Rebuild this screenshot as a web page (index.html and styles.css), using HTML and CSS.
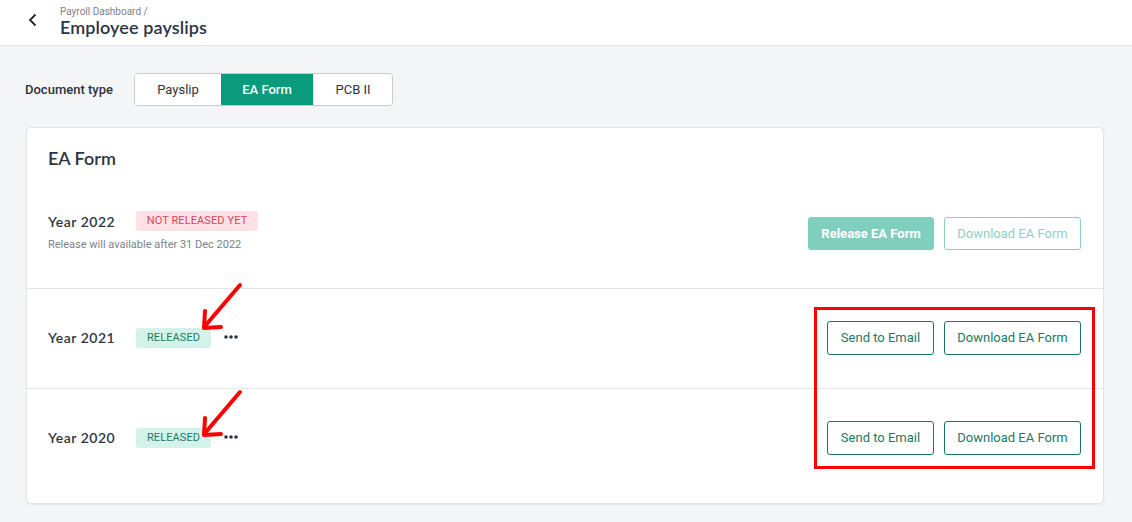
FILE: index.html
```html
<!DOCTYPE html>
<html>
<head>
<meta charset="utf-8">
<link rel="stylesheet" href="styles.css">
</head>
<body>
<header class="topbar">
  <svg class="back" width="12" height="14" viewBox="0 0 12 14"><path d="M8.5 1.5 L3 7 L8.5 12.5" fill="none" stroke="#1f2430" stroke-width="1.8"/></svg>
  <div class="titles">
    <div class="crumb">Payroll Dashboard /</div>
    <h1 class="title">Employee payslips</h1>
  </div>
</header>
<main class="main">
  <div class="doctype">
    <span class="doctype-label">Document type</span>
    <div class="seg">
      <button class="seg-btn seg-payslip">Payslip</button>
      <button class="seg-btn seg-ea active">EA Form</button>
      <button class="seg-btn seg-pcb">PCB II</button>
    </div>
  </div>
  <section class="card">
    <h2 class="card-title">EA Form</h2>
    <div class="row row-first">
      <div class="left">
        <div class="line">
          <span class="year">Year 2022</span>
          <span class="badge badge-pending">NOT RELEASED YET</span>
        </div>
        <div class="note">Release will available after 31 Dec 2022</div>
      </div>
      <div class="actions">
        <button class="btn btn-release">Release EA Form</button>
        <button class="btn btn-download disabled">Download EA Form</button>
      </div>
    </div>
    <div class="row">
      <div class="line">
        <span class="year">Year 2021</span>
        <span class="badge badge-released">RELEASED</span>
        <svg class="dots" width="14" height="4" viewBox="0 0 14 4"><circle cx="2" cy="2" r="1.8"/><circle cx="7" cy="2" r="1.8"/><circle cx="12" cy="2" r="1.8"/></svg>
      </div>
      <div class="actions">
        <button class="btn btn-email">Send to Email</button>
        <button class="btn btn-download">Download EA Form</button>
      </div>
    </div>
    <div class="row">
      <div class="line">
        <span class="year">Year 2020</span>
        <span class="badge badge-released">RELEASED</span>
        <svg class="dots" width="14" height="4" viewBox="0 0 14 4"><circle cx="2" cy="2" r="1.8"/><circle cx="7" cy="2" r="1.8"/><circle cx="12" cy="2" r="1.8"/></svg>
      </div>
      <div class="actions">
        <button class="btn btn-email">Send to Email</button>
        <button class="btn btn-download">Download EA Form</button>
      </div>
    </div>
  </section>
</main>
<svg class="annot" width="1132" height="522" viewBox="0 0 1132 522">
  <g fill="none" stroke="#ff0000" stroke-width="4" stroke-linecap="round" stroke-linejoin="round">
    <path d="M240 285 L205 326"/>
    <path d="M205 311 L204 328 L221 327"/>
    <path d="M240 392 L205 433"/>
    <path d="M205 418 L204 435 L221 434"/>
  </g>
  <rect x="815.5" y="308.5" width="278" height="159" fill="none" stroke="#ff0000" stroke-width="3"/>
</svg>
</body>
</html>
```
FILE: styles.css
```css
* { box-sizing: border-box; }
html, body { margin: 0; padding: 0; }
body {
  width: 1132px;
  height: 522px;
  overflow: hidden;
  background: #f4f5f7;
  font-family: Roboto, "Liberation Sans", sans-serif;
  color: #2c3340;
  position: relative;
}
.topbar {
  height: 46px;
  background: #fff;
  border-bottom: 1px solid #e3e5e8;
  display: flex;
  align-items: center;
  padding-left: 27px;
}
.back { margin-right: 21px; margin-top: -6px; }
.titles { display: flex; flex-direction: column; margin-top: -4px; }
.crumb { font-size: 10px; color: #7b808a; line-height: 12px; }
.title {
  margin: 0;
  font-family: Lato, "Open Sans", sans-serif;
  font-weight: 600;
  font-size: 18px;
  line-height: 18px;
  color: #2b3445;
  letter-spacing: 0.1px;
}
.main { padding: 27px 28px 0 25px; }
.doctype { display: flex; align-items: center; height: 33px; }
.doctype-label { font-size: 13px; font-weight: 500; color: #2d3340; width: 109px; }
.seg {
  display: flex;
  border: 1px solid #c8ccd2;
  border-radius: 4px;
  overflow: hidden;
  height: 33px;
  background: #fff;
}
.seg-btn {
  border: 0;
  background: #fff;
  font-family: Roboto, "Liberation Sans", sans-serif;
  font-size: 13px;
  color: #2c3340;
  padding: 0;
}
.seg-payslip { width: 86px; }
.seg-ea { width: 92px; }
.seg-pcb { width: 79px; border-left: 1px solid #e2e4e7; }
.seg-btn.active { background: #0a9b7c; color: #fff; font-weight: 500; }
.card {
  margin-top: 21px;
  margin-left: 1px;
  background: #fff;
  border: 1px solid #e1e3e6;
  border-radius: 5px;
  box-shadow: 0 1px 2px rgba(0,0,0,0.06);
  height: 377px;
}
.card-title {
  margin: 0;
  padding: 18px 21px 0;
  height: 51px;
  font-family: Lato, "Open Sans", sans-serif;
  font-weight: 600;
  font-size: 18px;
  line-height: 24px;
  color: #2b3445;
}
.row {
  display: flex;
  align-items: center;
  justify-content: space-between;
  padding: 0 22px 2px 21px;
  height: 100px;
  border-top: 1px solid #e3e5e8;
}
.row-first { border-top: 0; height: 109px; padding-bottom: 0; }
.left { display: flex; flex-direction: column; margin-top: -4px; }
.line { display: flex; align-items: center; }
.year {
  font-family: Lato, "Open Sans", sans-serif;
  font-weight: 600;
  font-size: 14px;
  color: #2f3542;
  letter-spacing: 0.5px;
  width: 88px;
}
.note { font-size: 11px; color: #7c818b; margin-top: 7px; line-height: 14px; }
.badge {
  font-size: 11px;
  height: 20px;
  line-height: 20px;
  border-radius: 3px;
  letter-spacing: 0.1px;
  text-align: center;
}
.badge-pending { background: #fde1e6; color: #d94560; width: 122px; }
.badge-released { background: #d3f2ea; color: #1d7b63; width: 75px; }
.dots { fill: #2b3340; margin-left: 13px; margin-top: -1px; }
.actions { display: flex; gap: 10px; }
.btn {
  height: 34px;
  border-radius: 3px;
  border: 1px solid #1a7664;
  background: #fff;
  color: #237866;
  font-family: Roboto, "Liberation Sans", sans-serif;
  font-size: 13px;
  padding: 0;
}
.btn-email { width: 107px; }
.btn-download { width: 137px; }
.btn-release {
  width: 126px;
  height: 33px;
  background: #7fcebe;
  border-color: #7fcebe;
  color: #fff;
  font-weight: 700;
}
.btn-download.disabled { border-color: #8ad0c2; color: #8fcfc2; height: 33px; }
.annot { position: absolute; left: 0; top: 0; pointer-events: none; }
```
